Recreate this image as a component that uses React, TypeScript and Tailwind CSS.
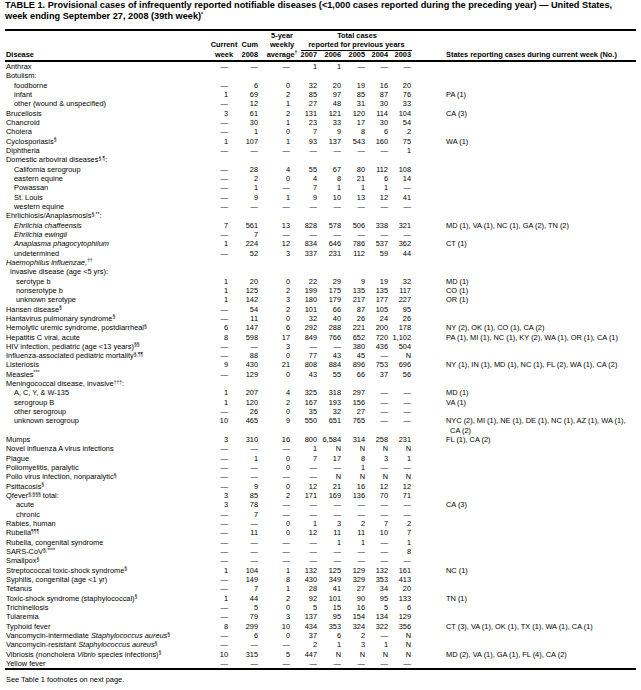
import React from "react";

const D = "—";
const cols =
  "grid grid-cols-[210px_14px_30px_41px_18px_24px_24px_23px_23px_minmax(0,1fr)]";

type R = {
  n: React.ReactNode;
  i?: number;
  v?: string[];
  s?: string;
};

const Sup = ({ c }: { c: string }) => (
  <span className="text-[5px] leading-none align-top relative top-[0.5px]">{c}</span>
);
const I = ({ c }: { c: string }) => <span className="italic">{c}</span>;

const rows: R[] = [
  { n: "Anthrax", v: [D, D, D, "1", "1", D, D, D] },
  { n: "Botulism:" },
  { n: "foodborne", i: 1, v: [D, "6", "0", "32", "20", "19", "16", "20"] },
  { n: "infant", i: 1, v: ["1", "69", "2", "85", "97", "85", "87", "76"], s: "PA (1)" },
  { n: "other (wound & unspecified)", i: 1, v: [D, "12", "1", "27", "48", "31", "30", "33"] },
  { n: "Brucellosis", v: ["3", "61", "2", "131", "121", "120", "114", "104"], s: "CA (3)" },
  { n: "Chancroid", v: [D, "30", "1", "23", "33", "17", "30", "54"] },
  { n: "Cholera", v: [D, "1", "0", "7", "9", "8", "6", "2"] },
  { n: <>Cyclosporiasis<Sup c="§" /></>, v: ["1", "107", "1", "93", "137", "543", "160", "75"], s: "WA (1)" },
  { n: "Diphtheria", v: [D, D, D, D, D, D, D, "1"] },
  { n: <>Domestic arboviral diseases<Sup c="§,¶" />:</> },
  { n: "California serogroup", i: 1, v: [D, "28", "4", "55", "67", "80", "112", "108"] },
  { n: "eastern equine", i: 1, v: [D, "2", "0", "4", "8", "21", "6", "14"] },
  { n: "Powassan", i: 1, v: [D, "1", D, "7", "1", "1", "1", D] },
  { n: "St. Louis", i: 1, v: [D, "9", "1", "9", "10", "13", "12", "41"] },
  { n: "western equine", i: 1, v: [D, D, D, D, D, D, D, D] },
  { n: <>Ehrlichiosis/Anaplasmosis<Sup c="§,**" />:</> },
  { n: <I c="Ehrlichia chaffeensis" />, i: 1, v: ["7", "561", "13", "828", "578", "506", "338", "321"], s: "MD (1), VA (1), NC (1), GA (2), TN (2)" },
  { n: <I c="Ehrlichia ewingii" />, i: 1, v: [D, "7", D, D, D, D, D, D] },
  { n: <I c="Anaplasma phagocytophilum" />, i: 1, v: ["1", "224", "12", "834", "646", "786", "537", "362"], s: "CT (1)" },
  { n: "undetermined", i: 1, v: [D, "52", "3", "337", "231", "112", "59", "44"] },
  { n: <><I c="Haemophilus influenzae," /><Sup c="††" /></> },
  { n: "invasive disease (age <5 yrs):", i: 2 },
  { n: "serotype b", i: 3, v: ["1", "20", "0", "22", "29", "9", "19", "32"], s: "MD (1)" },
  { n: "nonserotype b", i: 3, v: ["1", "125", "2", "199", "175", "135", "135", "117"], s: "CO (1)" },
  { n: "unknown serotype", i: 3, v: ["1", "142", "3", "180", "179", "217", "177", "227"], s: "OR (1)" },
  { n: <>Hansen disease<Sup c="§" /></>, v: [D, "54", "2", "101", "66", "87", "105", "95"] },
  { n: <>Hantavirus pulmonary syndrome<Sup c="§" /></>, v: [D, "11", "0", "32", "40", "26", "24", "26"] },
  { n: <>Hemolytic uremic syndrome, postdiarrheal<Sup c="§" /></>, v: ["6", "147", "6", "292", "288", "221", "200", "178"], s: "NY (2), OK (1), CO (1), CA (2)" },
  { n: "Hepatitis C viral, acute", v: ["8", "598", "17", "849", "766", "652", "720", "1,102"], s: "PA (1), MI (1), NC (1), KY (2), WA (1), OR (1), CA (1)" },
  { n: <>HIV infection, pediatric (age &lt;13 years)<Sup c="§§" /></>, v: [D, D, "3", D, D, "380", "436", "504"] },
  { n: <>Influenza-associated pediatric mortality<Sup c="§,¶¶" /></>, v: [D, "88", "0", "77", "43", "45", D, "N"] },
  { n: "Listeriosis", v: ["9", "430", "21", "808", "884", "896", "753", "696"], s: "NY (1), IN (1), MD (1), NC (1), FL (2), WA (1), CA (2)" },
  { n: <>Measles<Sup c="***" /></>, v: [D, "129", "0", "43", "55", "66", "37", "56"] },
  { n: <>Meningococcal disease, invasive<Sup c="†††" />:</> },
  { n: "A, C, Y, & W-135", i: 1, v: ["1", "207", "4", "325", "318", "297", D, D], s: "MD (1)" },
  { n: "serogroup B", i: 1, v: ["1", "120", "2", "167", "193", "156", D, D], s: "VA (1)" },
  { n: "other serogroup", i: 1, v: [D, "26", "0", "35", "32", "27", D, D] },
  { n: "unknown serogroup", i: 1, v: ["10", "465", "9", "550", "651", "765", D, D], s: "NYC (2), MI (1), NE (1), DE (1), NC (1), AZ (1), WA (1)," },
  { n: "", s: "\u00a0\u00a0CA (2)" },
  { n: "Mumps", v: ["3", "310", "16", "800", "6,584", "314", "258", "231"], s: "FL (1), CA (2)" },
  { n: "Novel influenza A virus infections", v: [D, D, D, "1", "N", "N", "N", "N"] },
  { n: "Plague", v: [D, "1", "0", "7", "17", "8", "3", "1"] },
  { n: "Poliomyelitis, paralytic", v: [D, D, "0", D, D, "1", D, D] },
  { n: <>Polio virus infection, nonparalytic<Sup c="§" /></>, v: [D, D, D, D, "N", "N", "N", "N"] },
  { n: <>Psittacosis<Sup c="§" /></>, v: [D, "9", "0", "12", "21", "16", "12", "12"] },
  { n: <>Qfever<Sup c="§,§§§" /> total:</>, v: ["3", "85", "2", "171", "169", "136", "70", "71"] },
  { n: "acute", i: 3, v: ["3", "78", D, D, D, D, D, D], s: "CA (3)" },
  { n: "chronic", i: 3, v: [D, "7", D, D, D, D, D, D] },
  { n: "Rabies, human", v: [D, D, "0", "1", "3", "2", "7", "2"] },
  { n: <>Rubella<Sup c="¶¶¶" /></>, v: [D, "11", "0", "12", "11", "11", "10", "7"] },
  { n: "Rubella, congenital syndrome", v: [D, D, D, D, "1", "1", D, "1"] },
  { n: <>SARS-CoV<Sup c="§,****" /></>, v: [D, D, D, D, D, D, D, "8"] },
  { n: <>Smallpox<Sup c="§" /></>, v: [D, D, D, D, D, D, D, D] },
  { n: <>Streptococcal toxic-shock syndrome<Sup c="§" /></>, v: ["1", "104", "1", "132", "125", "129", "132", "161"], s: "NC (1)" },
  { n: "Syphilis, congenital (age <1 yr)", v: [D, "149", "8", "430", "349", "329", "353", "413"] },
  { n: "Tetanus", v: [D, "7", "1", "28", "41", "27", "34", "20"] },
  { n: <>Toxic-shock syndrome (staphylococcal)<Sup c="§" /></>, v: ["1", "44", "2", "92", "101", "90", "95", "133"], s: "TN (1)" },
  { n: "Trichinellosis", v: [D, "5", "0", "5", "15", "16", "5", "6"] },
  { n: "Tularemia", v: [D, "79", "3", "137", "95", "154", "134", "129"] },
  { n: "Typhoid fever", v: ["8", "299", "10", "434", "353", "324", "322", "356"], s: "CT (3), VA (1), OK (1), TX (1), WA (1), CA (1)" },
  { n: <>Vancomycin-intermediate <I c="Staphylococcus aureus" /><Sup c="§" /></>, v: [D, "6", "0", "37", "6", "2", D, "N"] },
  { n: <>Vancomycin-resistant <I c="Staphylococcus aureus" /><Sup c="§" /></>, v: [D, D, D, "2", "1", "3", "1", "N"] },
  { n: <>Vibriosis (noncholera <I c="Vibrio" /> species infections)<Sup c="§" /></>, v: ["10", "315", "5", "447", "N", "N", "N", "N"], s: "MD (2), VA (1), GA (1), FL (4), CA (2)" },
  { n: "Yellow fever", v: [D, D, D, D, D, D, D, D] },
];

const indent = ["pl-[1px]", "pl-[9px]", "pl-[5px]", "pl-[11px]"];
const numCls = [
  "text-right pr-[1px]",
  "text-right pr-[1px]",
  "text-right pr-[10px]",
  "text-right pr-[1px]",
  "text-right pr-[1px]",
  "text-right pr-[1px]",
  "text-right pr-[1px]",
  "text-right pr-[1px]",
];

function Row({ r }: { r: R }) {
  const v = r.v ?? ["", "", "", "", "", "", "", ""];
  return (
    <div className={`${cols} h-[9.33px] leading-[9.33px]`}>
      <div className={`${indent[r.i ?? 0]} whitespace-nowrap`}>{r.n}</div>
      {v.map((x, k) => (
        <div key={k} className={`${numCls[k]} whitespace-nowrap`}>
          {x}
        </div>
      ))}
      <div className="pl-[34px] whitespace-nowrap">{r.s ?? ""}</div>
    </div>
  );
}

export default function App() {
  return (
    <div className="w-[641px] h-[690px] bg-white px-[5px] text-black font-['Liberation_Sans',Arial,sans-serif] overflow-hidden">
      <div className="font-bold text-[9.2px] leading-[11px] whitespace-nowrap">
        <div>
          TABLE 1. Provisional cases of infrequently reported notifiable diseases (&lt;1,000 cases reported during the preceding year) — United States,
        </div>
        <div>
          week ending September 27, 2008 (39th week)<Sup c="*" />
        </div>
      </div>

      <div className="mt-[7px] border-t-2 border-black text-[7.4px]">
        <div className="font-bold border-b-2 border-black pb-[1px]">
          <div className={`${cols} h-[9.33px] leading-[9.33px]`}>
            <div />
            <div />
            <div />
            <div className="flex justify-center pl-[5px] whitespace-nowrap">5-year</div>
            <div className="col-span-5 flex justify-center whitespace-nowrap pl-[2px]">Total cases</div>
            <div />
          </div>
          <div className={`${cols} h-[9.33px] leading-[9.33px]`}>
            <div />
            <div className="flex justify-center pl-[4px] whitespace-nowrap">Current</div>
            <div className="text-right pr-[1px]">Cum</div>
            <div className="flex justify-center pl-[5px] whitespace-nowrap">weekly</div>
            <div className="col-span-5 flex justify-center whitespace-nowrap border-b border-black ml-[1px]">
              reported for previous years
            </div>
            <div />
          </div>
          <div className={`${cols} h-[9.33px] leading-[9.33px]`}>
            <div className="pl-[1px]">Disease</div>
            <div className="flex justify-center pl-[4px] whitespace-nowrap">week</div>
            <div className="text-right pr-[1px]">2008</div>
            <div className="flex justify-center pl-[5px] whitespace-nowrap">
              average<Sup c="†" />
            </div>
            <div className="text-right pr-[1px]">2007</div>
            <div className="text-right pr-[1px]">2006</div>
            <div className="text-right pr-[1px]">2005</div>
            <div className="text-right pr-[1px]">2004</div>
            <div className="text-right pr-[1px]">2003</div>
            <div className="pl-[34px] whitespace-nowrap">States reporting cases during current week (No.)</div>
          </div>
        </div>

        <div className="border-b-2 border-black">
          {rows.map((r, k) => (
            <Row key={k} r={r} />
          ))}
        </div>

        <div className="mt-[5px] pl-[1px] leading-[9.33px]">See Table 1 footnotes on next page.</div>
      </div>
    </div>
  );
}
